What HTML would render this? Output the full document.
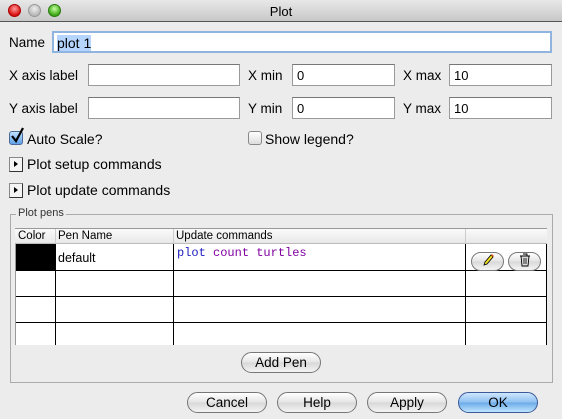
<!DOCTYPE html>
<html><head><style>
*{box-sizing:border-box;margin:0;padding:0}
body{width:562px;height:419px;background:#ececec;font-family:"Liberation Sans",sans-serif;font-size:13.5px;color:#000;position:relative;overflow:hidden}
.a{position:absolute}
.tb{left:0;top:0;width:562px;height:22px;background:linear-gradient(#e8e8e8,#c8c8c8);border-bottom:1px solid #555}
.dot{width:13px;height:13px;border-radius:50%;top:4px}
.lbl{white-space:nowrap}
.fld{background:#fff;border:1px solid #9a9a9a;border-top-color:#777;height:22px;padding:3px 4px;font-size:13px}
.btn{height:21px;border:1px solid #777;border-radius:11px;background:linear-gradient(#fff,#e4e4e4 50%,#d8d8d8 51%,#f4f4f4);text-align:center;line-height:19px;font-size:13.5px}
.hl{height:1px;background:#000}
.vl{width:1px;background:#000}
</style></head><body>
<div class="a tb"></div>
<div class="a dot" style="left:8px;background:radial-gradient(circle at 50% 35%,#ff9a9a,#d81010 70%);border:1px solid #a00"></div>
<div class="a dot" style="left:28px;background:radial-gradient(circle at 50% 35%,#eee,#b8b8b8 70%);border:1px solid #999"></div>
<div class="a dot" style="left:48px;background:radial-gradient(circle at 50% 35%,#c8ffa0,#3aa814 70%);border:1px solid #2a7a10"></div>
<div class="a lbl" style="left:0;width:562px;top:4px;text-align:center;font-size:13px">Plot</div>

<div class="a lbl" style="left:9px;top:35px">Name</div>
<div class="a fld" style="left:52px;top:31px;width:500px;border:2px solid #8fb4e0;padding:2px 3px;font-size:14px"><span style="background:#b5d5ff">plot 1</span></div>

<div class="a lbl" style="left:9px;top:68px">X axis label</div>
<div class="a fld" style="left:88px;top:64px;width:152px"></div>
<div class="a lbl" style="left:248px;top:68px">X min</div>
<div class="a fld" style="left:292px;top:64px;width:103px">0</div>
<div class="a lbl" style="left:403px;top:68px">X max</div>
<div class="a fld" style="left:449px;top:64px;width:103px">10</div>

<div class="a lbl" style="left:9px;top:101px">Y axis label</div>
<div class="a fld" style="left:88px;top:97px;width:152px"></div>
<div class="a lbl" style="left:248px;top:101px">Y min</div>
<div class="a fld" style="left:292px;top:97px;width:103px">0</div>
<div class="a lbl" style="left:403px;top:101px">Y max</div>
<div class="a fld" style="left:449px;top:97px;width:103px">10</div>

<div class="a" style="left:9px;top:131px;width:14px;height:14px;border:1px solid #4a6a9a;border-radius:3px;background:linear-gradient(#bfe0ff,#5fa0e8)"></div>
<svg class="a" style="left:9px;top:126px" width="16" height="18" viewBox="0 0 16 18"><path d="M3 10 L7 15 L14 2" fill="none" stroke="#000" stroke-width="2.2"/></svg>
<div class="a lbl" style="left:27px;top:131px;font-size:14px">Auto Scale?</div>
<div class="a" style="left:248px;top:131px;width:14px;height:14px;border:1px solid #888;border-radius:3px;background:linear-gradient(#fff,#ddd)"></div>
<div class="a lbl" style="left:265px;top:131px;font-size:14px">Show legend?</div>

<div class="a" style="left:9px;top:157px;width:14px;height:15px;border:1px solid #888;border-right-color:#333;border-bottom-color:#333;background:#f4f4f4"></div>
<div class="a" style="left:14px;top:161px;width:0;height:0;border-left:4px solid #000;border-top:3.5px solid transparent;border-bottom:3.5px solid transparent"></div>
<div class="a lbl" style="left:27px;top:156px;font-size:14px">Plot setup commands</div>
<div class="a" style="left:9px;top:183px;width:14px;height:15px;border:1px solid #888;border-right-color:#333;border-bottom-color:#333;background:#f4f4f4"></div>
<div class="a" style="left:14px;top:187px;width:0;height:0;border-left:4px solid #000;border-top:3.5px solid transparent;border-bottom:3.5px solid transparent"></div>
<div class="a lbl" style="left:27px;top:182px;font-size:14px">Plot update commands</div>

<div class="a" style="left:10px;top:214px;width:543px;height:169px;border:1px solid #aaa"></div>
<div class="a lbl" style="left:16px;top:207px;background:#ececec;padding:0 2px;font-size:11px;color:#333">Plot pens</div>

<div class="a" style="left:15px;top:228px;width:532px;height:117px;background:#fff;border-left:1px solid #999;border-right:1px solid #000"></div>
<div class="a" style="left:15px;top:228px;width:532px;height:16px;background:linear-gradient(#fafafa,#e8e8e8);border-top:1px solid #999;border-bottom:1px solid #bbb"></div>
<div class="a lbl" style="left:18px;top:230px;font-size:11.5px">Color</div>
<div class="a lbl" style="left:58px;top:230px;font-size:11.5px">Pen Name</div>
<div class="a lbl" style="left:176px;top:230px;font-size:11.5px">Update commands</div>
<div class="a" style="left:55px;top:229px;width:1px;height:15px;background:#ccc"></div>
<div class="a" style="left:173px;top:229px;width:1px;height:15px;background:#ccc"></div>
<div class="a" style="left:465px;top:229px;width:1px;height:15px;background:#ccc"></div>
<div class="a" style="left:16px;top:244px;width:39px;height:26px;background:#000"></div>
<div class="a vl" style="left:55px;top:244px;height:101px"></div>
<div class="a vl" style="left:173px;top:244px;height:101px"></div>
<div class="a vl" style="left:465px;top:244px;height:101px"></div>
<div class="a hl" style="left:16px;top:270px;width:531px"></div>
<div class="a hl" style="left:16px;top:296px;width:531px"></div>
<div class="a hl" style="left:16px;top:322px;width:531px"></div>
<div class="a lbl" style="left:58px;top:251px;font-size:12.5px">default</div>
<div class="a lbl" style="left:177px;top:246px;font-family:'Liberation Mono',monospace;font-size:12px;color:#8000a0"><span style="color:#2020c0">plot</span> count turtles</div>
<div class="a btn" style="left:471px;top:252px;width:33px;height:19px;line-height:17px"><svg width="14" height="14" viewBox="0 0 14 14"><path d="M3 12 L4 9 L10 2 L12 4 L6 11 Z" fill="#f0e020" stroke="#000" stroke-width="0.8"/><path d="M10 2 L12 4 L13 3 L11 1Z" fill="#e06020"/></svg></div>
<div class="a btn" style="left:508px;top:252px;width:33px;height:19px;line-height:17px"><svg width="12" height="14" viewBox="0 0 12 14"><path d="M2 3 H10 L9 13 H3 Z M1 3 H11 M4 1 H8 V3" fill="#ddd" stroke="#000" stroke-width="0.9"/><path d="M5 5V11M7 5V11" stroke="#000" stroke-width="0.8"/></svg></div>

<div class="a btn" style="left:241px;top:352px;width:80px">Add Pen</div>

<div class="a btn" style="left:187px;top:392px;width:80px">Cancel</div>
<div class="a btn" style="left:277px;top:392px;width:80px">Help</div>
<div class="a btn" style="left:367px;top:392px;width:80px">Apply</div>
<div class="a btn" style="left:458px;top:392px;width:80px;border-color:#3a5a9a;background:linear-gradient(#cfe6ff,#8cc0f0 50%,#6aaae8 51%,#bfe4ff)">OK</div>
</body></html>
